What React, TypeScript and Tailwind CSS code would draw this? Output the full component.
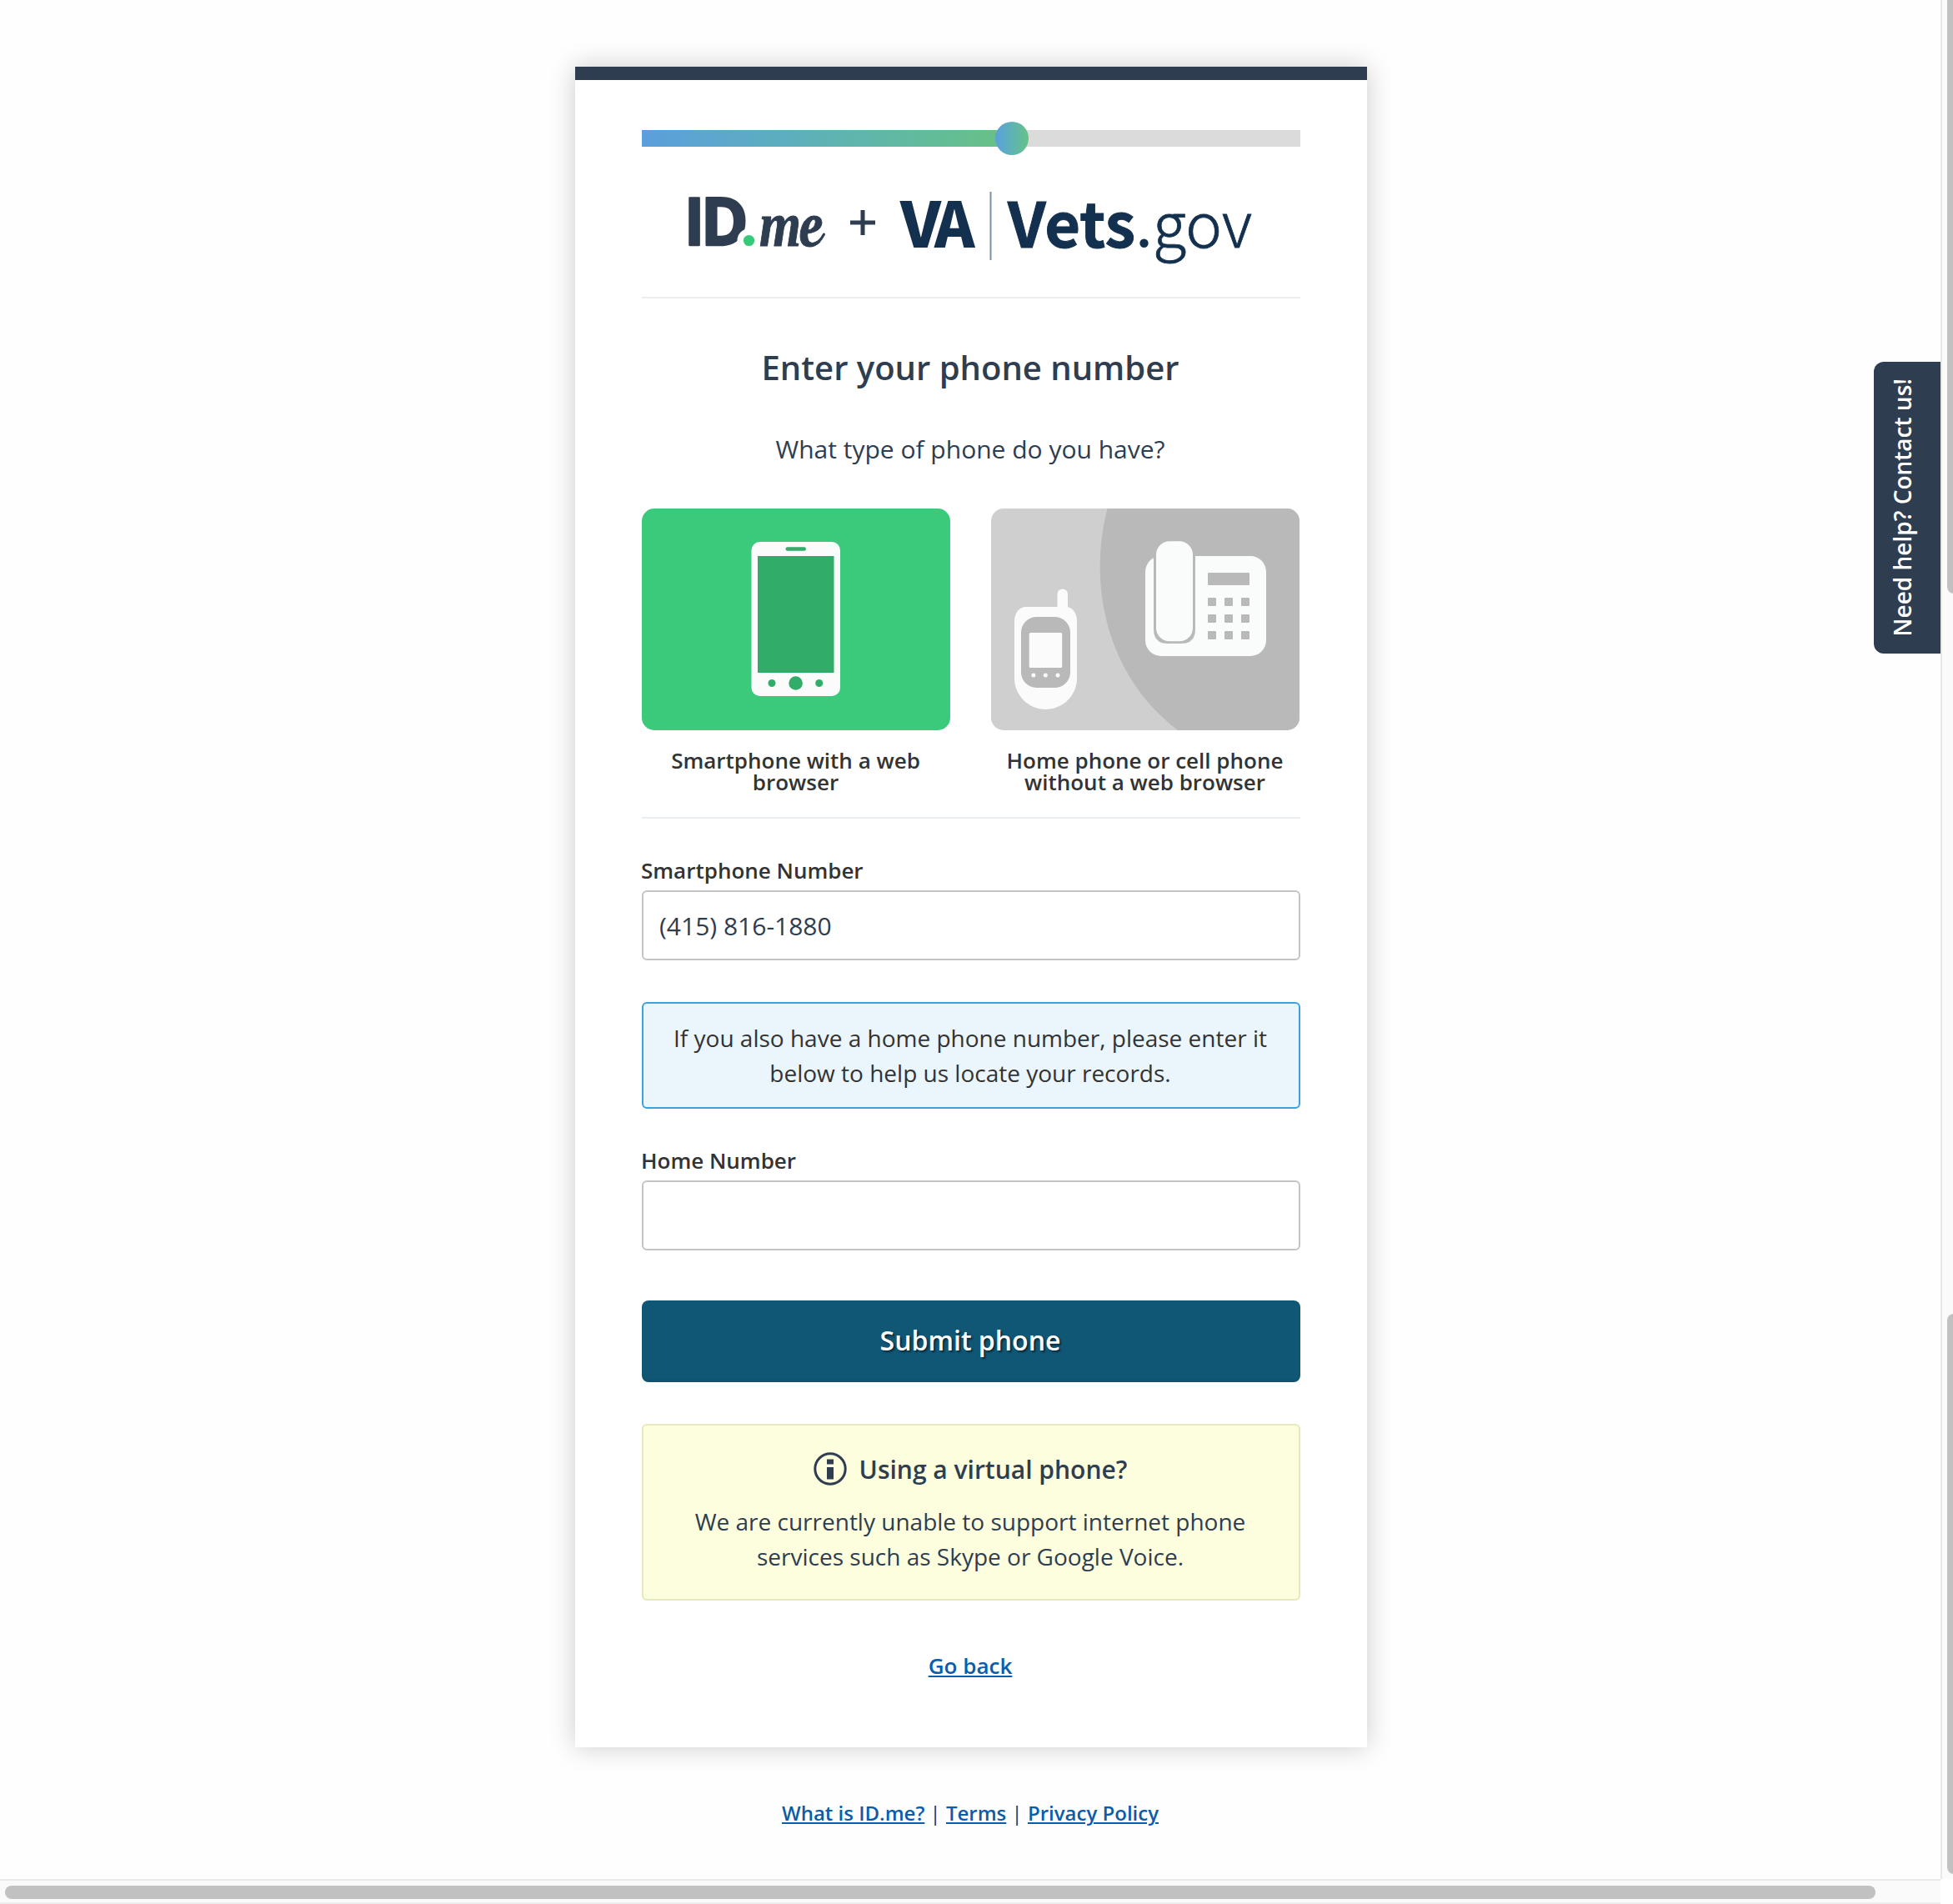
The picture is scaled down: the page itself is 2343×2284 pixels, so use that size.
import React from "react";

const NAVY = "#2e3d50";
const VA_BLUE = "#14304f";

function Progress() {
  return (
    <div className="relative h-5 bg-[#dbdbdb]">
      <div className="h-full w-[444px] bg-linear-to-r from-[#5b9fdd] to-[#67c283]" />
      <div className="absolute -top-2.5 left-[424px] size-10 rounded-full bg-linear-to-r from-[#5b9fdd] to-[#67c283]" />
    </div>
  );
}

function Logos() {
  return (
    <svg className="block h-[100px] w-full overflow-visible" viewBox="770 220 790 100">
      <g fill={NAVY} stroke={NAVY} strokeWidth="2.5" strokeLinejoin="round" fontFamily="Open Sans" fontWeight="700" fontSize="79">
        <text x="820.700" y="293.800" textLength="24.600" lengthAdjust="spacingAndGlyphs">I</text>
        <text x="840.800" y="293.800" textLength="57" lengthAdjust="spacingAndGlyphs">D</text>
      </g>
      <circle cx="898.5" cy="288.500" r="14" fill="#fff" />
      <circle cx="898.5" cy="288.500" r="6.600" fill="#38c978" />
      <g fill={NAVY} stroke={NAVY} strokeWidth="1" strokeLinejoin="round" fontFamily="Liberation Serif" fontWeight="700" fontStyle="italic" fontSize="76">
        <text x="911" y="294.500" textLength="50" lengthAdjust="spacingAndGlyphs">m</text>
        <text x="958.500" y="294.500" textLength="29" lengthAdjust="spacingAndGlyphs">e</text>
      </g>
      <path d="M970 293.500C978 294.500 984 290 988.500 281" fill="none" stroke={NAVY} strokeWidth="3" strokeLinecap="round" />
      <path d="M1020 267h30M1035 252v30" stroke={NAVY} strokeWidth="5" />
      <g fill={VA_BLUE} fontFamily="Noto Sans CJK SC">
        <text x="1080" y="296.500" fontWeight="900" fontSize="75" textLength="49" lengthAdjust="spacingAndGlyphs">V</text>
        <text x="1121" y="296.500" fontWeight="900" fontSize="75" textLength="48.500" lengthAdjust="spacingAndGlyphs">A</text>
        <text x="1209" y="296.500" fontWeight="700" fontSize="74" textLength="153" lengthAdjust="spacingAndGlyphs" stroke={VA_BLUE} strokeWidth="1">Vets</text>
        <text x="1383" y="296.500" fontWeight="300" fontSize="74" textLength="119" lengthAdjust="spacingAndGlyphs" stroke={VA_BLUE} strokeWidth="0.8">gov</text>
      </g>
      <circle cx="1372.500" cy="291.800" r="5.200" fill={VA_BLUE} />
      <path d="M1188.500 230v82" stroke="#7d8fa5" strokeWidth="2" />
    </svg>
  );
}

function SmartphoneTile() {
  return (
    <svg className="block h-[266px] w-[370px]" viewBox="0 0 370 266">
      <rect width="370" height="266" rx="15" fill="#3bc97b" />
      <rect x="131.5" y="40" width="106.5" height="185" rx="10" fill="#fbfbfb" />
      <rect x="172.5" y="46.300" width="24.500" height="4.400" rx="2.200" fill="#32ad69" />
      <rect x="139" y="57" width="91.500" height="140" fill="#32ad69" />
      <g fill="#32ad69">
        <circle cx="156" cy="209.500" r="4.500" />
        <circle cx="184.600" cy="209.500" r="8.300" />
        <circle cx="212.700" cy="209.500" r="4.500" />
      </g>
    </svg>
  );
}

function HomePhoneTile() {
  return (
    <svg className="block h-[266px] w-[370px]" viewBox="0 0 370 266">
      <defs>
        <clipPath id="tile">
          <rect width="370" height="266" rx="15" />
        </clipPath>
      </defs>
      <g clipPath="url(#tile)">
        <rect width="370" height="266" fill="#cfcfcf" />
        <path d="M139.500 0C115 96 141 203 224 266H370V0Z" fill="#b9b9b9" />
      </g>
      <rect x="79.500" y="96.500" width="12.500" height="40" rx="6.250" fill="#fbfbfb" />
      <path d="M42 118H90C98 118 103 126 103 135V204C103 224 86 241 65.500 241S28 224 28 204V135C28 125 34 118 42 118Z" fill="#fbfbfb" />
      <rect x="36" y="130" width="59" height="85" rx="18.500" fill="#b9b9b9" />
      <rect x="45.700" y="149" width="39.500" height="42" rx="1.500" fill="#fbfbfb" />
      <g fill="#fbfbfb">
        <circle cx="50.800" cy="200" r="2.500" />
        <circle cx="65.300" cy="200" r="2.500" />
        <circle cx="80" cy="200" r="2.500" />
      </g>
      <rect x="185" y="57" width="145" height="120" rx="19" fill="#fafcfb" />
      <path d="M195 50V145Q195 162 212 162H228Q245 162 245 145V50Z" fill="#b9b9b9" />
      <rect x="198" y="39.300" width="44" height="120" rx="16" fill="#fafcfb" />
      <g fill="#b9b9b9">
        <rect x="260" y="77" width="50" height="15" rx="1" />
        {[107, 127, 147].map((y) =>
          [260, 280, 300].map((x) => <rect key={`${x}-${y}`} x={x} y={y} width="10" height="10" rx="1" />)
        )}
      </g>
    </svg>
  );
}

function InfoIcon() {
  return (
    <svg className="size-10" viewBox="0 0 40 40">
      <circle cx="20" cy="20" r="18.200" fill="none" stroke={NAVY} strokeWidth="3" />
      <rect x="16" y="8.500" width="8" height="6" fill={NAVY} />
      <rect x="16" y="18" width="8" height="14.500" fill={NAVY} />
    </svg>
  );
}

function FieldLabel({ children }: { children: React.ReactNode }) {
  return <div className="-ml-px text-[26px] leading-9 font-semibold text-[#333]">{children}</div>;
}

const linkClass = "font-semibold text-[#0b5cab] underline decoration-2 underline-offset-2";

export default function App() {
  return (
    <div className="grid h-[2284px] w-[2343px] grid-cols-[2328px_15px] grid-rows-[2254px_30px] overflow-hidden bg-white font-['Open_Sans',sans-serif] text-[#2e3d50]">
      <main className="relative flex flex-col items-center bg-[#fefefe] pl-0.5 pt-20">
        <section className="flex h-[2016px] w-[950px] flex-col border-t-16 border-[#2e3d50] bg-white px-20 pt-[60px] shadow-[0_0_30px_rgba(0,0,0,0.2)]">
          <Progress />
          <div className="mt-11 h-[138px] border-b-2 border-[#ededed]">
            <Logos />
          </div>
          <h1 className="mt-[53px] pr-0.5 text-center text-[40px] leading-[60px] font-semibold">Enter your phone number</h1>
          <p className="mt-12 pr-0.5 text-center text-[30px] leading-10">What type of phone do you have?</p>
          <div className="mt-[51px] flex h-[372px] gap-[49px] border-b-2 border-[#e9eef2] text-center text-[26px] leading-[26px] font-semibold text-[#333]">
            <div className="w-[370px]">
              <SmartphoneTile />
              <div className="mt-[23px] pr-[33px] pl-8">Smartphone with a web browser</div>
            </div>
            <div className="w-[370px]">
              <HomePhoneTile />
              <div className="mt-[23px] pr-[17px] pl-4">Home phone or cell phone without a web browser</div>
            </div>
          </div>
          <div className="mt-11">
            <FieldLabel>Smartphone Number</FieldLabel>
            <div className="mt-1.5 flex h-[84px] items-center rounded-md border-2 border-[#c4c4c4] px-[19px] text-[30px]">(415) 816-1880</div>
          </div>
          <div className="mt-[50px] rounded-md border-2 border-[#3ba2dc] bg-[#eaf5fc] py-5 pr-[21px] pl-[19px] text-center text-[28px] leading-[42px] text-[#333]">
            If you also have a home phone number, please enter it
            <br />
            below to help us locate your records.
          </div>
          <div className="mt-11">
            <FieldLabel>Home Number</FieldLabel>
            <div className="mt-1.5 h-[84px] rounded-md border-2 border-[#c4c4c4]" />
          </div>
          <button className="mt-[60px] h-[98px] shrink-0 rounded-lg bg-[#105675] pr-0.5 pb-0.5 text-[32px] font-semibold text-white shadow-[inset_0_-3px_3px_rgba(0,0,0,0.04)] [text-shadow:2px_2px_2px_rgba(0,0,0,0.5)]">
            Submit phone
          </button>
          <div className="mt-[50px] h-[212px] rounded-md border-2 border-[#e6e9bb] bg-[#fdfedd] pt-8 pr-0.5 text-center">
            <div className="flex items-center justify-center gap-[15px] text-[30px] leading-10 font-semibold">
              <InfoIcon />
              <span className="pt-0.5 leading-[38px]">Using a virtual phone?</span>
            </div>
            <p className="mt-[22px] text-[28px] leading-[42px]">
              We are currently unable to support internet phone
              <br />
              services such as Skype or Google Voice.
            </p>
          </div>
          <div className="mt-[60px] pr-0.5 text-center text-[26px] leading-9">
            <a className={linkClass}>Go back</a>
          </div>
        </section>
        <footer className="mt-[61px] pr-0.5 text-center text-[24px] leading-9 text-[#333]">
          <a className={linkClass}>What is ID.me?</a> | <a className={linkClass}>Terms</a> | <a className={linkClass}>Privacy Policy</a>
        </footer>
        <div className="absolute top-[434px] right-0 flex h-[350px] w-20 items-center justify-center rounded-l-xl bg-[#2e3d50] pr-3">
          <span className="rotate-180 text-[28px] leading-9 font-semibold whitespace-nowrap text-white [writing-mode:vertical-rl]">Need help? Contact us!</span>
        </div>
      </main>
      <div className="flex flex-col justify-between overflow-hidden border-l-2 border-[#e8e8e8] bg-[#fafafa] pb-1.5 pl-1.5">
        <div className="-mt-4 h-[728px] w-4 rounded-full bg-[#c1c1c1]" />
        <div className="h-[672px] w-4 rounded-full bg-[#c1c1c1]" />
      </div>
      <div className="border-y-2 border-t-[#e8e8e8] border-b-[#ececec] bg-[#fafafa] pt-1.5 pl-1.5">
        <div className="h-4 w-[2244px] rounded-full bg-[#c1c1c1]" />
      </div>
    </div>
  );
}
